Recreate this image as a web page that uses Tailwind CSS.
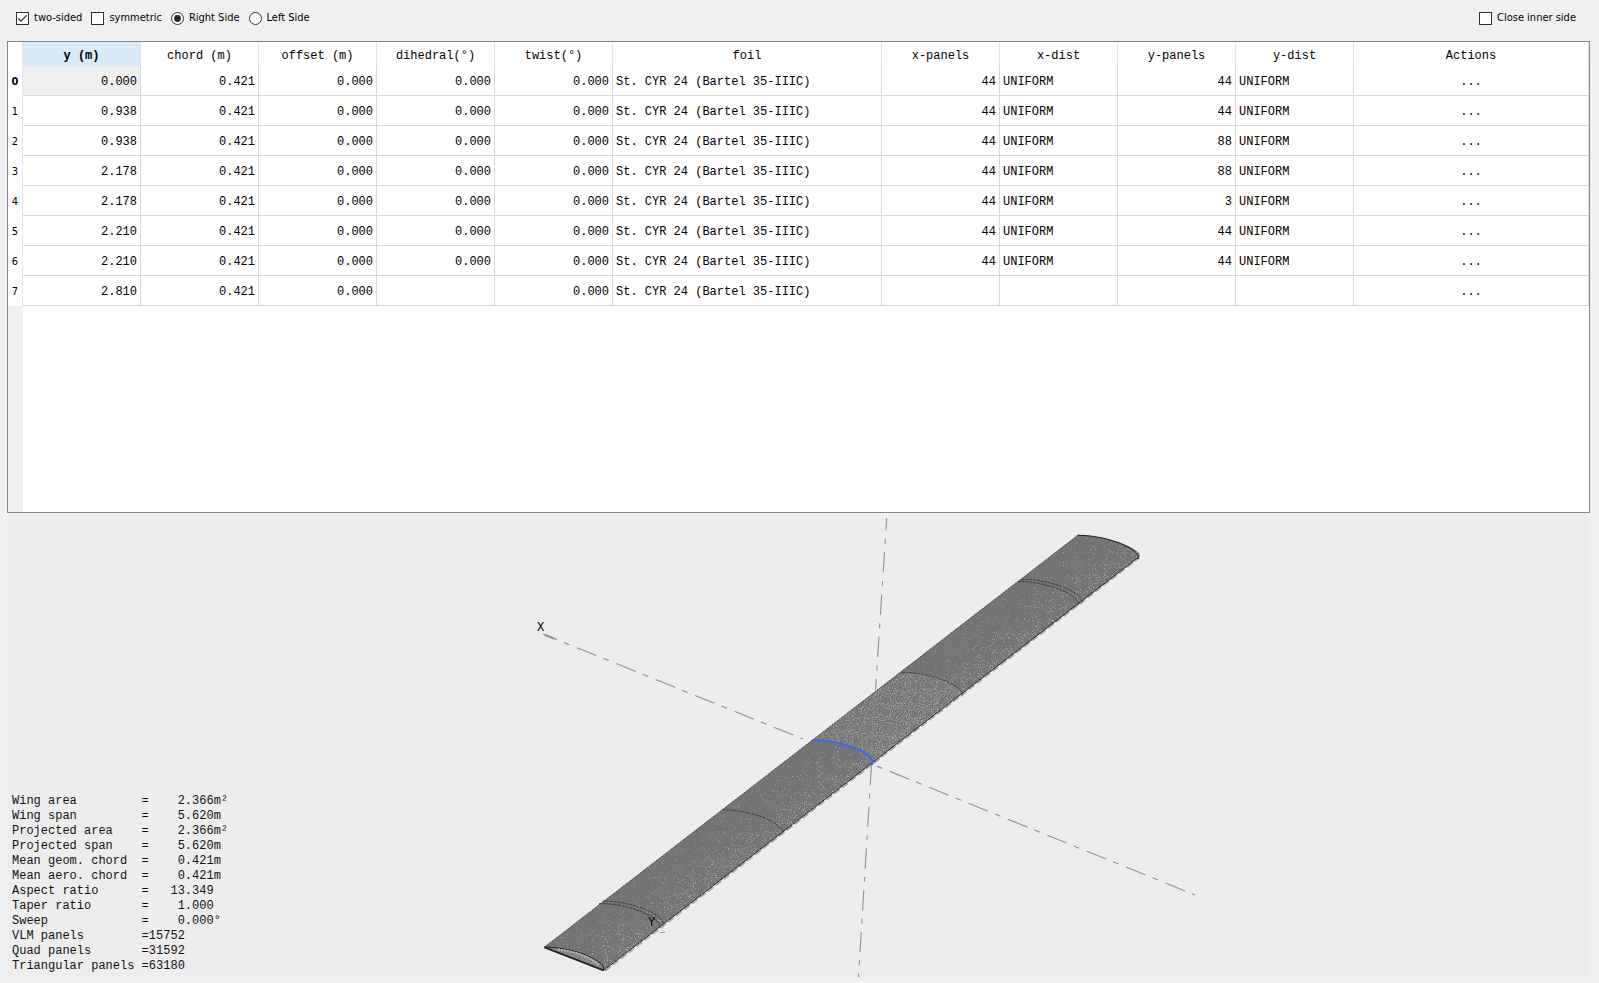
<!DOCTYPE html>
<html lang="en">
<head>
<meta charset="utf-8">
<title>Wing editor</title>
<script src="https://cdn.jsdelivr.net/npm/@tailwindcss/browser@4"></script>
</head>
<body class="bg-[#f0f0f0]">
<main class="flex h-screen flex-col pr-[9px] pb-[6px] pl-[7px] text-black">
  <form class="flex h-[41px] shrink-0 items-center gap-[9px] pr-[14px] pb-[5px] pl-[9px] font-['DejaVu_Sans_Condensed','Open_Sans',sans-serif] text-[11px]">
    <label class="flex items-center gap-[5px]"><span class="grid"><input type="checkbox" checked class="peer col-start-1 row-start-1 size-[13px] appearance-none border border-[#333] bg-white"><svg class="pointer-events-none invisible col-start-1 row-start-1 size-[13px] peer-checked:visible" viewBox="0 0 13 13" fill="none" stroke="#222" stroke-width="1.2"><path d="M2.5 6.5 5 9.2 10.6 3.4"/></svg></span>two-sided</label>
    <label class="flex items-center gap-[5px]"><input type="checkbox" class="size-[13px] appearance-none border border-[#333] bg-white">symmetric</label>
    <label class="flex items-center gap-[5px]"><span class="grid"><input type="radio" name="side" checked class="peer col-start-1 row-start-1 size-[13px] appearance-none rounded-full border border-[#333] bg-white"><svg class="pointer-events-none invisible col-start-1 row-start-1 size-[13px] peer-checked:visible" viewBox="0 0 13 13"><circle cx="6.5" cy="6.5" r="3.4" fill="#2b2b2b"/></svg></span>Right Side</label>
    <label class="flex items-center gap-[5px]"><span class="grid"><input type="radio" name="side" class="peer col-start-1 row-start-1 size-[13px] appearance-none rounded-full border border-[#333] bg-white"><svg class="pointer-events-none invisible col-start-1 row-start-1 size-[13px] peer-checked:visible" viewBox="0 0 13 13"><circle cx="6.5" cy="6.5" r="3.4" fill="#2b2b2b"/></svg></span>Left Side</label>
    <label class="ml-auto flex items-center gap-[5px]"><input type="checkbox" class="size-[13px] appearance-none border border-[#333] bg-white">Close inner side</label>
  </form>

  <section class="flex min-h-0 flex-[470] flex-col overflow-hidden border border-[#828790] bg-white">
    <table class="w-full table-fixed border-separate border-spacing-0 font-['Liberation_Mono',monospace] text-[12px] leading-[15px]">
      <colgroup>
        <col class="w-[15px]"><col class="w-[118px]"><col class="w-[118px]"><col class="w-[118px]"><col class="w-[118px]"><col class="w-[118px]"><col class="w-[269px]"><col class="w-[118px]"><col class="w-[118px]"><col class="w-[118px]"><col class="w-[118px]"><col>
      </colgroup>
      <thead>
        <tr class="h-[24px] *:border-r *:border-[#e5e5e5] *:p-0 *:pt-[4px] *:font-normal">
          <td></td><th scope="col" class="bg-[#d9ebf9] font-bold!">y (m)</th><th scope="col">chord (m)</th><th scope="col">offset (m)</th><th scope="col">dihedral(°)</th><th scope="col">twist(°)</th><th scope="col">foil</th><th scope="col">x-panels</th><th scope="col">x-dist</th><th scope="col">y-panels</th><th scope="col">y-dist</th><th scope="col">Actions</th>
        </tr>
      </thead>
      <tbody id="sections"></tbody>
    </table>
    <div class="w-[15px] flex-1 bg-[#f0f0f0]"></div>
  </section>

  <section class="relative mt-[5px] min-h-0 flex-[459] overflow-hidden bg-[#ededed]">
    <svg class="block h-full w-full" viewBox="7 518 1583 459" preserveAspectRatio="xMidYMid meet" fill="none">
      <defs>
        <linearGradient id="shade" gradientUnits="userSpaceOnUse" x1="812" y1="740" x2="849" y2="788">
          <stop offset="0" stop-color="#000" stop-opacity=".15"/><stop offset=".45" stop-color="#000" stop-opacity=".4"/><stop offset="1" stop-color="#000" stop-opacity=".8"/>
        </linearGradient>
        <clipPath id="wing"><path id="outline" d="M544.5 947 1078 535c24 0 54 10 61 18q2 3-1 5L603.5 970.5Z"/></clipPath>
        <filter id="mesh" filterUnits="userSpaceOnUse" x="540" y="530" width="604" height="445" color-interpolation-filters="sRGB">
          <feTurbulence type="fractalNoise" baseFrequency=".93" numOctaves="2" seed="7"/>
          <feColorMatrix values="0 0 0 0 0  0 0 0 0 0  0 0 0 0 0  1 0 0 0 0" result="n"/>
          <feComposite in="n" in2="SourceGraphic" operator="arithmetic" k2="6" k3="1.5" k4="-4.4"/>
          <feColorMatrix values="0 0 0 0 .66  0 0 0 0 .66  0 0 0 0 .66  0 0 0 1 0"/>
        </filter>
        <filter id="mesh-root" filterUnits="userSpaceOnUse" x="700" y="640" width="280" height="200" color-interpolation-filters="sRGB">
          <feTurbulence type="fractalNoise" baseFrequency=".93" numOctaves="2" seed="3"/>
          <feColorMatrix values="0 0 0 0 0  0 0 0 0 0  0 0 0 0 0  1 0 0 0 0"/>
          <feColorMatrix values="0 0 0 0 .6  0 0 0 0 .6  0 0 0 0 .6  0 0 0 6 -3" result="dots"/>
          <feComposite in="dots" in2="SourceGraphic" operator="in"/>
        </filter>
        <path id="rib" d="M0 0c25 0 55 10 60.500 21q1 2-1 3"/>
      </defs>
      <g stroke="#909090" stroke-width="1.1">
        <path d="M543 634 803 739" stroke-dasharray="21 7.5 6 8" stroke-dashoffset="6"/>
        <path d="M545 635 554 638.5" stroke-width="2"/>
        <path d="M874 765 1195 895" stroke-dasharray="6 8 21 7.5" stroke-dashoffset="-3"/>
        <path d="M886.7 518 875.5 690" stroke-dasharray="20.3 8.6 5 8.4" stroke-dashoffset="8"/>
        <path d="M871.5 765 858.5 977" stroke-dasharray="20.3 8.2 5 8.3"/>
      </g>
      <path d="M605 971 1139 558" stroke="#aaa" stroke-width="1.800" stroke-dasharray="7 3"/>
      <use href="#outline" fill="#747474"/>
      <g clip-path="url(#wing)">
        <path d="M540 530h604v445H540z" fill="url(#shade)" filter="url(#mesh)"/>
        <path d="M812 740 903 672C930 672 956 682 962 694L873 762C868 750 838 740 812 740Z" fill="#000" filter="url(#mesh-root)"/>
        <path d="M874 690 871 762" stroke="#999" opacity=".5"/>
      </g>
      <path d="M544.5 947 1078 535" stroke="#333" stroke-width=".8" stroke-dasharray="2 1"/>
      <path d="M603.5 970.5 1138 557.5" stroke="#222" stroke-width="1" stroke-dasharray="4 .6"/>
      <g stroke="#303030" stroke-width=".8" stroke-dasharray="3 .8">
        <use href="#rib" x="722" y="809.7"/><use href="#rib" x="602.5" y="901"/><use href="#rib" x="599" y="903.5"/>
        <use href="#rib" x="902" y="672.3"/><use href="#rib" x="1021.7" y="579.3"/><use href="#rib" x="1018" y="581.5"/>
      </g>
      <use href="#rib" x="1078" y="535.3" stroke="#222"/>
      <path d="M544.5 947c24 0 54 10 59 20v3L544.5 947Z" fill="#858585" stroke="#222"/>
      <path d="M558 949.500c17 2 32 7 41 16" stroke="#b5b5b5" stroke-width="2" stroke-dasharray="2 1"/>
      <path d="M544.5 947.5 603.5 970.5" stroke="#222" stroke-width="1.4"/>
      <path d="M812 740c25 0 55 10 60 20q1 2 0 5" stroke="#4169e1" stroke-width="2.2"/>
      <path d="M660 932.5h5" stroke="#999"/>
      <g fill="#000" font-family="Liberation Mono, monospace" font-size="12"><text x="537" y="631">X</text><text x="648" y="926">Y</text></g>
    </svg>
    <pre class="absolute bottom-[3px] left-[5px] font-['Liberation_Mono',monospace] text-[12px] leading-[15px] text-[#111]">Wing area         =    2.366m²
Wing span         =    5.620m
Projected area    =    2.366m²
Projected span    =    5.620m
Mean geom. chord  =    0.421m
Mean aero. chord  =    0.421m
Aspect ratio      =   13.349
Taper ratio       =    1.000
Sweep             =    0.000°
VLM panels        =15752
Quad panels       =31592
Triangular panels =63180</pre>
  </section>
</main>
<script>
  const y = ['0.000', '0.938', '0.938', '2.178', '2.178', '2.210', '2.210', '2.810'];
  const yPanels = [44, 44, 88, 88, 3, 44, 44, ''];
  const right = 'border-r border-b border-[#d8d8d8] p-0 pt-[3px] pr-[3px] text-right';
  const left = 'border-r border-b border-[#d8d8d8] p-0 pt-[3px] pl-[3px] text-left';
  document.getElementById('sections').innerHTML = y.map((v, i) => {
    const last = i === 7;
    const xp = last ? '' : 44, dist = last ? '' : 'UNIFORM';
    return `<tr class="h-[30px]">
      <th scope="row" class="border-r border-[#e5e5e5] p-0 pt-px font-['DejaVu_Sans_Condensed','Open_Sans',sans-serif] text-[11px] ${i ? 'font-normal' : 'font-bold'}">${i}</th>
      <td class="${right} ${i ? '' : 'bg-[#f0f0f0]'}">${v}</td>
      <td class="${right}">0.421</td><td class="${right}">0.000</td>
      <td class="${right}">${last ? '' : '0.000'}</td><td class="${right}">0.000</td>
      <td class="${left}">St. CYR 24 (Bartel 35-IIIC)</td>
      <td class="${right}">${xp}</td><td class="${left}">${dist}</td>
      <td class="${right}">${yPanels[i]}</td><td class="${left}">${dist}</td>
      <td class="border-r border-b border-[#d8d8d8] p-0 pt-[3px] text-center"><button type="button" class="w-full">...</button></td>
    </tr>`;
  }).join('');
</script>
</body>
</html>
